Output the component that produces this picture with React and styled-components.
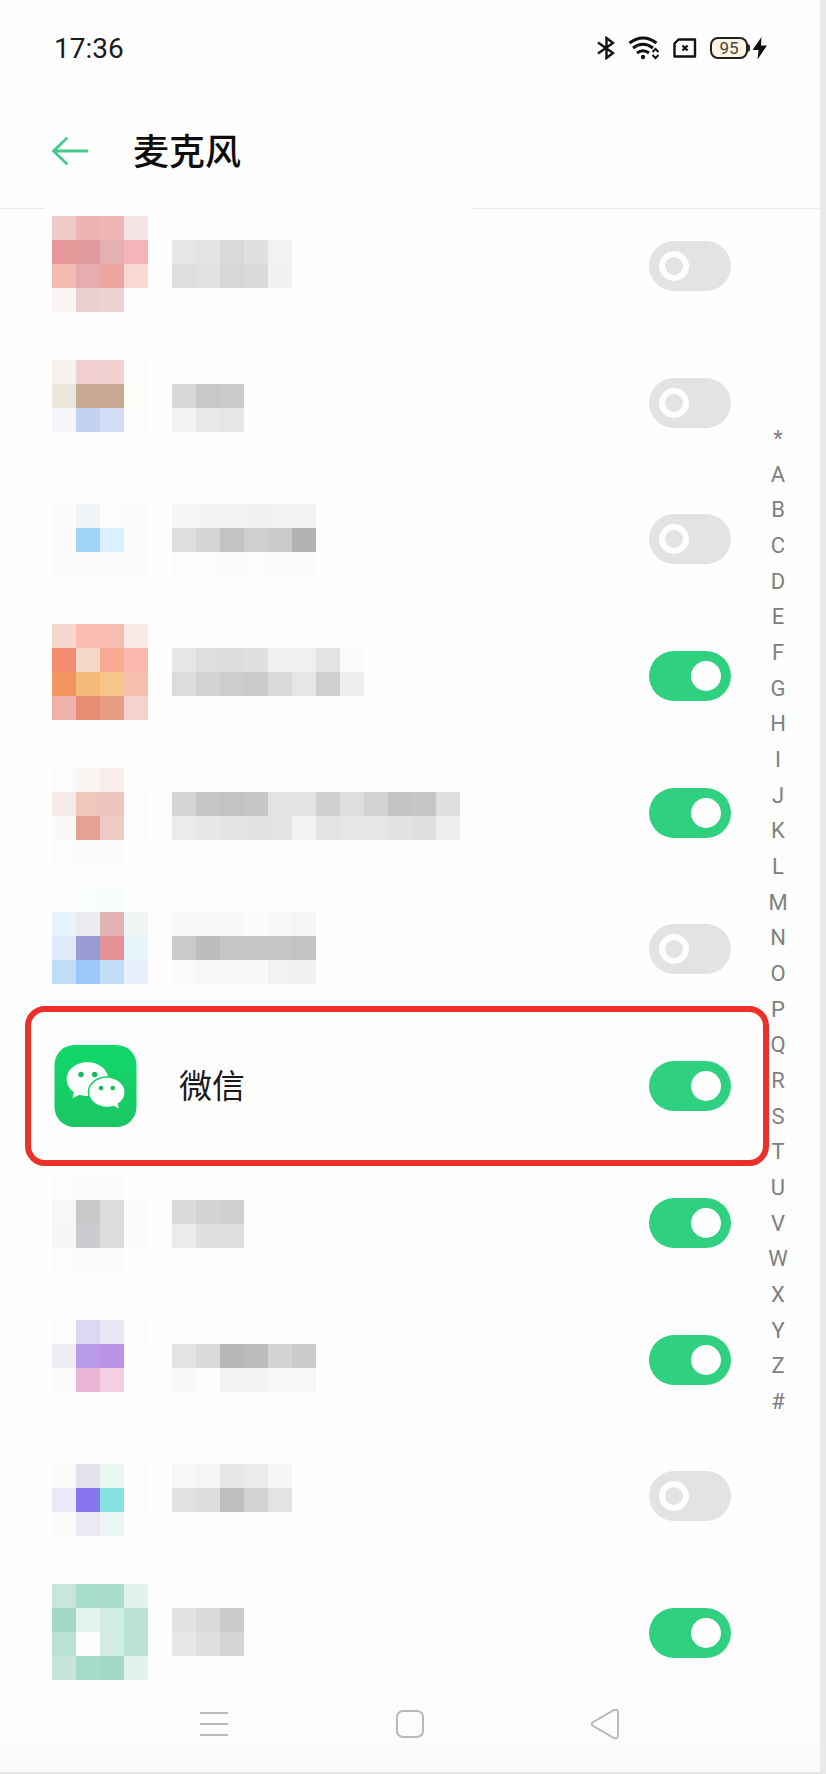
import { useState } from 'react';
import styled, { createGlobalStyle } from 'styled-components';

const CELL = 24;

//every masked app is a mosaic: 4 columns of icon, 1 empty, then the name
const apps = [
	{
		top: -2,
		cells: [
			'f0c9c9 eeb2b2 efb6b6 f6e3e4',
			'e69899 e09a9d e5b0b2 f5b4b7 - e6e6e6 e3e3e3 d9d9d9 e0e0e0 f2f2f2',
			'f4bbb0 e8acae eca59f f9d9d1 - dedede e1e1e1 d7d7d7 dadada f1f1f1',
			'faf4f4 ebcfd0 efd3d3 -',
		],
	},
	{
		top: 5,
		cells: [
			'f9f0f0 f2cfd0 f4d1d1 fdfbfb',
			'ece5dc c7a995 c8a893 fdfcf8 - d8d8d8 c8c8c8 cacaca',
			'f4f6fa c3d2f1 d2dcf5 fcfcfc - f2f2f2 e8e8e8 e6e6e6',
		],
	},
	{
		top: 13,
		cells: [
			'fcfbfb eef4f8 fcfcfc fcfbfb - f6f6f6 f4f4f4 f3f3f3 f1f1f1 f2f2f2 f3f3f3',
			'fcfbfb a1d3f5 d9f1fc fcfbfb - dedede d5d5d5 c3c3c3 d0d0d0 cacaca b3b3b3',
			'fbfbfb fbfbfb fbfbfb fbfbfb - fcfcfc fcfcfc fbfbfb fcfcfc fbfbfb fbfbfb',
		],
	},
	{
		top: -4,
		cells: [
			'f5d7cf f9bcb2 f7bdb3 faeae6',
			'f48c70 f5d8c7 f7ab93 fab8af - e7e7e7 dedede dcdcdc e0e0e0 f0f0f0 f0f0f0 e3e3e3 fafafa',
			'f4955f f5b978 f7c48b f7bfad - dcdcdc d2d2d2 cdcdcd cacaca dadada e6e6e6 d0d0d0 efefef',
			'eeb2ab e78e75 e89c82 f6d2cd',
		],
	},
	{
		top: 3,
		cells: [
			'fcfcfc faf5f2 f8efed fdfdfd',
			'f6eae7 f0c7bb ecc5bc fcfcfc - d6d6d6 c5c5c5 c3c3c3 c6c6c6 e3e3e3 e4e4e4 d0d0d0 dedede d3d3d3 c3c3c3 c7c7c7 e0e0e0',
			'fbf9f7 e5a293 eecac5 fcfcfc - ebebeb e6e6e6 e4e4e4 e2e2e2 e3e3e3 f4f4f4 e3e3e3 e6e6e6 e6e6e6 e2e2e2 e0e0e0 eeeeee',
			'fcfcfc fbfbfb fbfbfb -',
		],
	},
	{
		top: -13,
		cells: [
			'fbfdfe fafdfe f7fcfd -',
			'e8f2fc e9ebef e1b3b2 f0f5f5 - f8f8f8 f7f7f7 f8f8f8 fbfbfb f8f8f8 f5f5f5',
			'e0eaf9 999bd5 e5919a e8f4fc - cacaca bdbdbd c5c5c5 c5c5c5 c6c6c6 c3c3c3',
			'c1dcf5 9ec8f9 c0def8 e8f1fb - fafafa f8f8f8 f9f9f9 f9f9f9 f2f2f2 f1f1f1',
		],
	},
	{ name: '微信' },
	{
		top: 1,
		cells: [
			'fcfcfc fbfbfb fbfbfb -',
			'f7f7f7 c9c9cb dddddd fbfbfb - dadada d3d3d3 d1d1d1',
			'f6f6f6 cccbd0 dddddd fbfbfb - ebebeb e0e0e0 e0e0e0',
			'fcfcfc fbfbfb fbfbfb -',
		],
	},
	{
		top: 8,
		cells: [
			'fbfcfb ddd8f2 e8e7f4 fcfcfc',
			'f1edf7 ba9be8 bb93e7 - - e3e3e3 dbdbdb b8b8b8 bcbcbc d3d3d3 cacaca',
			'fbfbfb e9b5d4 f0d0e2 - - f8f8f8 fdfdfd f3f3f3 f4f4f4 f7f7f7 f7f7f7',
		],
	},
	{
		top: 16,
		cells: [
			'fbfbfa e2e2ee eaf6f0 fcfcfc - f7f7f7 f5f5f5 e6e6e6 ebebeb f5f5f5',
			'ece8f7 8775ef 86e2df fcfcfc - e2e2e2 dcdcdc bebebe d2d2d2 e3e3e3',
			'fbfbfb ece9f4 ebf7f5 -',
		],
	},
	{
		top: -1,
		cells: [
			'c7e7dc a8ddcb aadecb e2f2eb',
			'a2d9c5 e3f4ee d1ede4 bce4d6 - e2e2e2 dadada cccccc',
			'b9e2d4 fefefe d2ede4 bce4d6 - e7e7e7 e0e0e0 d6d6d6',
			'c6e6dc a5dac8 a2d9c5 e1f1eb',
		],
	},
];

const initialState = [
	false,
	false,
	false,
	true,
	true,
	false,
	true,
	true,
	true,
	false,
	true,
];

const letters = '*ABCDEFGHIJKLMNOPQRSTUVWXYZ#'.split('');

const Mosaic = ({ top, cells }) => (
	<MosaicSvg viewBox='0 0 408 96' shapeRendering='crispEdges' aria-hidden='true'>
		{cells.map((line, y) =>
			line
				.split(' ')
				.map((color, x) =>
					color === '-' ? null : (
						<rect
							key={`${x}-${y}`}
							x={x * CELL}
							y={top + y * CELL}
							width={CELL}
							height={CELL}
							fill={`#${color}`}
						/>
					)
				)
		)}
	</MosaicSvg>
);

const WechatIcon = () => (
	<AppIcon viewBox='0 0 96 96' aria-hidden='true'>
		<defs>
			<linearGradient id='wechat' x1='0' y1='0' x2='0' y2='1'>
				<stop offset='0' stopColor='#10d86a' />
				<stop offset='1' stopColor='#1bc663' />
			</linearGradient>
		</defs>
		<rect x='2.5' y='7' width='82' height='82' rx='20' fill='url(#wechat)' />
		<path
			d='M35.5 24.3c-11.6 0-20.8 7.5-20.8 17 0 5.300 2.800 9.900 7.200 13L20.500 60.300l7-3.500c2.500.8 5.200 1.300 8 1.300 11.600 0 20.800-7.400 20.800-16.800s-9.200-17-20.800-17z'
			fill='#fff'
		/>
		<path
			d='M54.900 39.700c-9.800 0-17.700 6.500-17.700 14.500s7.900 14.500 17.700 14.500c2.300 0 4.600-.4 6.600-1l5.300 2.900-1.200-5c4.200-2.700 6.900-6.800 6.900-11.400 0-8-7.900-14.500-17.600-14.500z'
			fill='#fff'
			stroke='#17cf67'
			strokeWidth='3'
			paintOrder='stroke'
		/>
		<g fill='#17b95a'>
			<circle cx='29' cy='36.5' r='2.7' />
			<circle cx='42.7' cy='36.5' r='2.7' />
			<circle cx='49' cy='50' r='2.3' />
			<circle cx='60.7' cy='50' r='2.3' />
		</g>
	</AppIcon>
);

const StatusIcons = () => (
	<Status>
		<svg width='18' height='24' viewBox='0 0 18 24' fill='none' stroke='#111' strokeWidth='2.4'>
			<path d='M1 6.5L16 17l-6.500 5V2L16 7 1 17.5' />
		</svg>
		<svg width='32' height='24' viewBox='0 0 32 24' fill='none' stroke='#111' strokeWidth='3'>
			<path d='M1.500 7Q15 -3 28.500 7M5 12Q15 4.500 25 12M9 17Q15 12.500 21 17' />
			<circle cx='15' cy='21' r='2.2' fill='#111' stroke='none' />
			<path d='M24.500 16l3-3 3 3M24.500 19l3 3 3-3' strokeWidth='2' />
		</svg>
		<svg width='24' height='24' viewBox='0 0 24 24' fill='none' stroke='#111' strokeWidth='2.4'>
			<path d='M5.500 3.500H22V20.500H1.500V7.500z' strokeLinejoin='round' />
			<path d='M9.500 9.500l5 5M14.500 9.500l-5 5' strokeWidth='2.4' />
		</svg>
		<Power>
			<Battery>95</Battery>
			<svg width='16' height='24' viewBox='0 0 16 24' fill='#111'>
				<path d='M9.500 1L0.500 14h6L5.500 23.500 15 9.500H9z' />
			</svg>
		</Power>
	</Status>
);

const App = () => {
	const [allowed, setAllowed] = useState(initialState);

	const handleToggle = (index) => {
		setAllowed(allowed.map((on, i) => (i === index ? !on : on)));
	};

	return (
		<>
			<GlobalStyle />
			<Screen>
				<StatusBar>
					<time>17:36</time>
					<StatusIcons />
				</StatusBar>
				<Header>
					<BackButton aria-label='返回'>
						<svg width='38' height='30' viewBox='0 0 38 30'>
							<path
								d='M35 14H1.500M14.500 1.500L1.500 14l13 12.500'
								fill='none'
								stroke='#43c98c'
								strokeWidth='2.8'
								strokeLinecap='round'
								strokeLinejoin='round'
							/>
						</svg>
					</BackButton>
					<h1>麦克风</h1>
				</Header>
				<Content>
					<AppList>
						{apps.map((app, i) => (
							<AppRow key={i} $marked={!!app.name}>
								<AppLabel htmlFor={`app-${i}`}>
									{app.name ? (
										<>
											<WechatIcon />
											<AppName>{app.name}</AppName>
										</>
									) : (
										<Mosaic top={app.top} cells={app.cells} />
									)}
								</AppLabel>
								<Switch
									id={`app-${i}`}
									type='checkbox'
									role='switch'
									aria-label={app.name || `应用 ${i + 1}`}
									checked={allowed[i]}
									onChange={() => handleToggle(i)}
								/>
							</AppRow>
						))}
					</AppList>
					<LetterIndex aria-label='索引'>
						{letters.map((letter) => (
							<a key={letter} href={`#${letter}`}>
								{letter}
							</a>
						))}
					</LetterIndex>
				</Content>
				<SystemNav>
					<button aria-label='菜单'>
						<svg width='32' height='32' viewBox='0 0 32 32'>
							<path d='M3 5h28M3 16h28M3 27h28' />
						</svg>
					</button>
					<button aria-label='主页'>
						<svg width='32' height='32' viewBox='0 0 32 32'>
							<rect x='3' y='3' width='26' height='26' rx='6' />
						</svg>
					</button>
					<button aria-label='后退'>
						<svg width='32' height='32' viewBox='0 0 32 32'>
							<path d='M1.500 14.500L23 2Q27 1 27 4.500v23Q27 31 23 30L1.500 17.500Q0 16 1.500 14.500z' />
						</svg>
					</button>
				</SystemNav>
			</Screen>
		</>
	);
};

const GlobalStyle = createGlobalStyle`
	*,
	*::before,
	*::after {
		box-sizing: border-box;
	}

	body {
		margin: 0;
		background-color: #fefefe;
		font-family: Roboto, 'Noto Sans CJK SC', sans-serif;
	}

	button {
		display: flex;
		align-items: center;
		justify-content: center;
		padding: 0;
		border: none;
		background: none;
		cursor: pointer;
	}
`;

const Screen = styled.div`
	display: flex;
	flex-direction: column;
	min-height: 100vh;
	border-right: 6px solid #e9e9e9;
	border-bottom: 2px solid #e6e6e6;
`;

const StatusBar = styled.div`
	display: flex;
	align-items: center;
	justify-content: space-between;
	height: 96px;
	padding: 0 52px 0 54px;

	time {
		font-size: 28px;
		color: #1c1c1c;
	}
`;

const Status = styled.div`
	display: flex;
	align-items: center;
	gap: 13px;
`;

const Power = styled.div`
	display: flex;
	align-items: center;
	gap: 4px;
`;

const Battery = styled.span`
	position: relative;
	width: 38px;
	height: 22px;
	border: 2px solid #22211c;
	border-radius: 8px;
	background-color: #fbf5e2;
	font-size: 17px;
	line-height: 18px;
	text-align: center;
	color: #4a463a;

	&::after {
		content: '';
		position: absolute;
		top: 5px;
		right: -4px;
		width: 3px;
		height: 8px;
		border-radius: 0 3px 3px 0;
		background-color: #22211c;
	}
`;

const Header = styled.header`
	display: flex;
	align-items: center;
	gap: 43px;
	height: 113px;
	background: linear-gradient(
			90deg,
			#ececec 45px,
			transparent 45px,
			transparent 472px,
			#ececec 472px
		)
		bottom / 100% 1px no-repeat;
	padding: 0 52px;

	h1 {
		margin: 0;
		font-size: 36px;
		font-weight: 500;
		line-height: 48px;
		color: #0d0d0d;
	}
`;

const BackButton = styled.button`
	width: 38px;
	height: 48px;
	padding-bottom: 2px;
`;

const Content = styled.main`
	display: flex;
	flex: 1;
	padding-right: 22px;
`;

const AppList = styled.ul`
	display: flex;
	flex: 1;
	flex-direction: column;
	justify-content: space-between;
	margin: 0;
	padding: 9px 27px 0 52px;
	list-style: none;
`;

const AppRow = styled.li`
	position: relative;
	display: flex;
	align-items: center;
	justify-content: space-between;
	height: 96px;

	&::after {
		content: '';
		display: ${({ $marked }) => ($marked ? 'block' : 'none')};
		position: absolute;
		inset: -32px -38px -32px -27px;
		border: 6px solid #ec2f29;
		border-radius: 20px;
		pointer-events: none;
	}
`;

const AppLabel = styled.label`
	display: flex;
	align-items: center;
	gap: 31px;
`;

const AppName = styled.span`
	padding-bottom: 4px;
	font-size: 33px;
	color: #1a1a1a;
`;

const MosaicSvg = styled.svg`
	display: block;
	width: 408px;
	height: 96px;
	overflow: visible;
`;

const AppIcon = styled.svg`
	display: block;
	width: 96px;
	height: 96px;
`;

const Switch = styled.input`
	appearance: none;
	display: flex;
	align-items: center;
	justify-content: flex-start;
	flex: none;
	width: 82px;
	height: 50px;
	margin: 0;
	padding: 0 10px;
	border-radius: 25px;
	background-color: #e3e3e3;
	cursor: pointer;

	&::before {
		content: '';
		width: 30px;
		height: 30px;
		border: 6px solid #fefefe;
		border-radius: 50%;
	}

	&:checked {
		justify-content: flex-end;
		background-color: #2fd180;
	}

	&:checked::before {
		background-color: #fefefe;
	}
`;

const LetterIndex = styled.nav`
	display: flex;
	flex-direction: column;
	width: 40px;
	padding: 212px 0 261px;

	a {
		display: flex;
		flex: 1;
		align-items: center;
		justify-content: center;
		font-size: 22px;
		line-height: 24px;
		color: #808080;
		text-decoration: none;
	}
`;

const SystemNav = styled.nav`
	display: flex;
	height: 91px;
	padding: 0 14% 6px;
	background: linear-gradient(#fefefe, #fafafa);

	button {
		flex: 1;
	}

	svg {
		fill: none;
		stroke: #b9b9b9;
		stroke-width: 2;
	}
`;

export default App;
